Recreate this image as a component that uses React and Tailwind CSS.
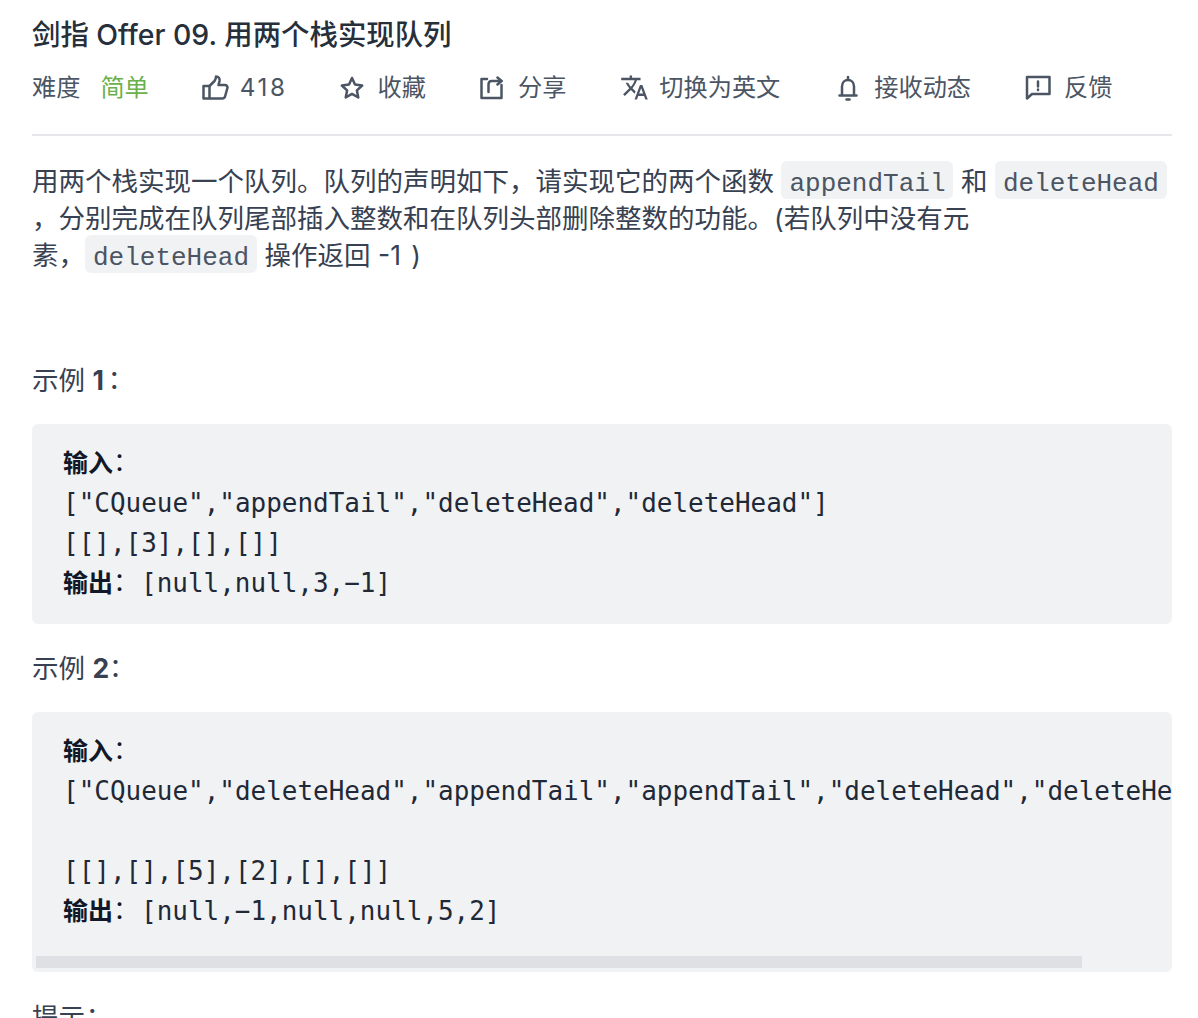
import React from "react";
import { MdTranslate } from "react-icons/md";

const sans = "font-['Inter','Noto_Sans_CJK_SC',sans-serif]";

const ThumbIcon = () => (
  <svg width="27" height="25" viewBox="0 0 27 25" fill="none" stroke="currentColor" strokeWidth="2.5" strokeLinejoin="round">
    <path d="M1.5 11h6v12.5h-6z" />
    <path d="M7.5 11l5-5c1-1.5 1.5-2.7 1.5-4.5 2.5 0 4 2 3.5 4.5l-1 4h6.5c1.7 0 2.8 1.5 2.4 3l-2.2 8c-.3 1.4-1.4 2.5-3 2.5H7.5" />
  </svg>
);
const StarIcon = () => (
  <svg width="24" height="24" viewBox="0 0 24 24" fill="none" stroke="currentColor" strokeWidth="2.5" strokeLinejoin="round">
    <path d="M12 2l3 6.6 7.2.9-5.3 4.9 1.4 7.1-6.3-3.6-6.3 3.6 1.4-7.1-5.3-4.9 7.2-.9z" />
  </svg>
);
const ShareIcon = () => (
  <svg width="25" height="24" viewBox="0 0 25 24" fill="none" stroke="currentColor" strokeWidth="2.5" strokeLinecap="round" strokeLinejoin="round">
    <path d="M8 3H2.5v19h20V9" />
    <path d="M9.5 16V8.5c0-2 1.2-3.5 3.2-3.5h9.8" />
    <path d="M18.5 1.5L22.5 5l-4 3.5" />
  </svg>
);
const BellIcon = () => (
  <svg width="22" height="26" viewBox="0 0 22 26" fill="none" stroke="currentColor" strokeWidth="2.5" strokeLinejoin="round" strokeLinecap="round">
    <path d="M2.500 20.500h17M5 20.500v-9c0-3.700 2.500-6.500 6-6.500s6 2.800 6 6.500v9" />
    <path d="M11 2v3" />
    <path d="M9.500 24.500h3" />
  </svg>
);
const FeedbackIcon = () => (
  <svg width="26" height="25" viewBox="0 0 26 25" fill="none" stroke="currentColor" strokeWidth="2.5" strokeLinejoin="round" strokeLinecap="round">
    <path d="M2 2h22.500v17H7l-5 4.500z" />
    <path d="M13 6.500v5M13 14.500v.5" />
  </svg>
);

const Meta = ({ icon, label, className }) => (
  <div className={`flex items-center ${className}`}>
    {icon}
    <span>{label}</span>
  </div>
);

const Code = ({ children }) => (
  <code className="rounded-[6px] bg-[#f1f2f4] px-2 pt-[8px] pb-0 font-['Liberation_Mono',monospace] text-[26px] leading-none text-[#4b5563]">
    {children}
  </code>
);

const PreLabel = ({ children }) => (
  <strong className="text-[25px] leading-none font-bold text-[#111827]">
    {children}
    <span className="inline-block w-[28px] font-['Noto_Sans_CJK_TC',sans-serif] leading-none font-normal">
      <span className="relative -left-[6px]">：</span>
    </span>
  </strong>
);

const Colon = ({ className }) => (
  <span className={`relative font-['Noto_Sans_CJK_TC',sans-serif] leading-none font-normal ${className}`}>：</span>
);

const Pre = ({ children, className = "" }) => (
  <div className={`relative overflow-hidden rounded-[6px] bg-[#f1f2f4] pl-[31px] ${className}`}>
    <pre className="font-['DejaVu_Sans_Mono','Noto_Sans_CJK_SC',monospace] text-[25.96px] leading-[40px] text-[#1f2937] whitespace-pre">
      {children}
    </pre>
  </div>
);

export default function App() {
  return (
    <div className={`h-[1018px] overflow-hidden bg-white pl-[32px] pr-[26px] pt-[15px] ${sans}`}>
      <h1 className="text-[28.4px] leading-[40px] font-medium text-[#262f3a]">剑指 Offer 09. 用两个栈实现队列</h1>
      <div className="mt-[13px] flex h-[40px] items-center text-[24.2px] text-[#4b5563]">
        <span>难度</span>
        <span className="ml-[20px] text-[#6ab04c]">简单</span>
        <Meta className="ml-[53px] gap-[11px]" icon={<ThumbIcon />} label={<span className="tracking-[2.6px]">418</span>} />
        <Meta className="ml-[52px] gap-[14px]" icon={<StarIcon />} label="收藏" />
        <Meta className="ml-[53px] gap-[14px]" icon={<ShareIcon />} label="分享" />
        <Meta className="ml-[54px] gap-[10px]" icon={<MdTranslate size={29} />} label="切换为英文" />
        <Meta className="ml-[57px] gap-[15px]" icon={<BellIcon />} label="接收动态" />
        <Meta className="ml-[54px] gap-[13px]" icon={<FeedbackIcon />} label="反馈" />
      </div>
      <div className="mt-[26px] h-[2px] bg-[#e5e7eb]" />
      <p className="mt-[27px] whitespace-nowrap text-[26.5px] leading-[37px] text-[#374151]">
        用两个栈实现一个队列。队列的声明如下，请实现它的两个函数 <Code>appendTail</Code> 和 <Code>deleteHead</Code>
        <br />
        ，分别完成在队列尾部插入整数和在队列头部删除整数的功能。(若队列中没有元
        <br />
        素，<Code>deleteHead</Code> 操作返回 -1 <span className="ml-[3px]">)</span>
      </p>
      <p className="mt-[88px] text-[26.5px] leading-[37px] text-[#374151]">
        示例 <strong className="font-bold">1</strong>
        <Colon className="-left-[3px]" />
      </p>
      <Pre className="mt-[25px] h-[200px] pt-[19px]">
        <PreLabel>输入</PreLabel>
        {"\n"}
        {'["CQueue","appendTail","deleteHead","deleteHead"]\n[[],[3],[],[]]\n'}
        <PreLabel>输出</PreLabel>
        {"[null,null,3,−1]"}
      </Pre>
      <p className="mt-[26px] text-[26.5px] leading-[37px] text-[#374151]">
        示例 <strong className="font-bold">2</strong>
        <Colon className="-left-[7px]" />
      </p>
      <Pre className="mt-[25px] h-[260px] pt-[19px]">
        <PreLabel>输入</PreLabel>
        {"\n"}
        {'["CQueue","deleteHead","appendTail","appendTail","deleteHead","deleteHead"]\n\n[[],[],[5],[2],[],[]]\n'}
        <PreLabel>输出</PreLabel>
        {"[null,−1,null,null,5,2]"}
        <div className="absolute bottom-[4px] left-[4px] h-[12px] w-[1046px] bg-[#dfe0e3]" />
      </Pre>
      <p className="mt-[27px] text-[26.5px] leading-[37px] text-[#374151]">
        提示
        <Colon className="-left-[6px]" />
      </p>
    </div>
  );
}
